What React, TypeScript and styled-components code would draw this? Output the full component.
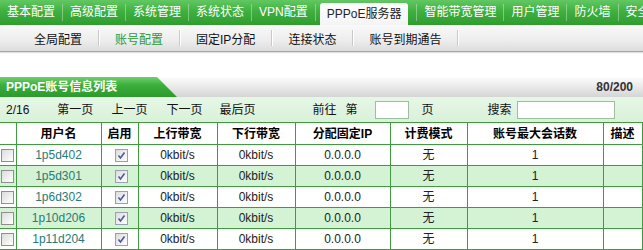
import React from 'react';
import styled, { createGlobalStyle } from 'styled-components';

const GlobalStyle = createGlobalStyle`
    html, body {
        margin: 0;
        padding: 0;
        background: #fff;
    }
    body {
        width: 643px;
        overflow: hidden;
        font-family: "Liberation Sans", "Noto Sans CJK SC", sans-serif;
        font-size: 12px;
        line-height: 14px;
        color: #222;
    }
`;

const TOP_ITEMS = ['基本配置', '高级配置', '系统管理', '系统状态', 'VPN配置'];
const TOP_ITEMS_AFTER = ['智能带宽管理', '用户管理', '防火墙', '安全'];
const SUB_ITEMS = ['全局配置', '账号配置', '固定IP分配', '连接状态', '账号到期通告'];
const HEADERS = ['', '用户名', '启用', '上行带宽', '下行带宽', '分配固定IP', '计费模式', '账号最大会话数', '描述'];
const COL_WIDTHS = [16, 85, 37, 79, 78, 95, 77, 136, 39];
const ACCOUNTS = ['1p5d402', '1p5d301', '1p6d302', '1p10d206', '1p11d204'];

const TopNav = styled.div`
    display: flex;
    align-items: flex-end;
    height: 25px;
    background: linear-gradient(#62c862 0%, #3fb03f 45%, #2e9d2e 100%);
    white-space: nowrap;
    overflow: hidden;
`;

const NavItem = styled.div`
    height: 25px;
    line-height: 25px;
    padding: 0 7px;
    color: #fff;
`;

const NavSep = styled.div`
    align-self: center;
    width: 1px;
    height: 17px;
    background: rgba(255, 255, 255, 0.35);
    flex-shrink: 0;
`;

const NavTab = styled.div`
    height: 22px;
    line-height: 23px;
    padding: 0 7px;
    margin: 0 8px 0 4px;
    border-radius: 3px 3px 0 0;
    background: linear-gradient(#ffffff, #f4f4f4);
    color: #222;
`;

const SubNav = styled.div`
    display: flex;
    align-items: center;
    height: 26px;
    padding-left: 18px;
    background: linear-gradient(#f9f9f9 0%, #ededed 60%, #dcdcdc 100%);
    border-bottom: 1px solid #a5a5a5;
    box-shadow: 0 1px 1px rgba(0, 0, 0, 0.12);
`;

const SubItem = styled.div<{ $active?: boolean }>`
    padding: 3px 16px 0;
    color: ${(p) => (p.$active ? '#2f9a2f' : '#111')};
`;

const SubSep = styled.div`
    width: 1px;
    height: 16px;
    background: #c9c9c9;
    box-shadow: 1px 0 0 #fff;
`;

const Section = styled.div`
    margin-top: 25px;
`;

const TitleBar = styled.div`
    display: flex;
    justify-content: space-between;
    align-items: center;
    height: 20px;
    background: linear-gradient(#fdfdfd, #d5d5d5);
`;

const TitleTab = styled.div`
    width: 177px;
    height: 20px;
    line-height: 21px;
    padding-left: 6px;
    box-sizing: border-box;
    clip-path: polygon(0 0, 157px 0, 177px 100%, 0 100%);
    background: linear-gradient(#6fcf6f 0%, #3caf3c 40%, #2b9a2b 100%);
    color: #fff;
    font-weight: bold;
`;

const Count = styled.div`
    padding-right: 10px;
    font-weight: bold;
    color: #333;
`;

const Pager = styled.div`
    display: flex;
    align-items: center;
    height: 25px;
    padding-left: 6px;
    background: linear-gradient(#e6f7e6, #d9f1d9);
    color: #111;
`;

const PagerItem = styled.span<{ $gap: number }>`
    margin-left: ${(p) => p.$gap}px;
`;

const PagerInput = styled.span<{ $width: number; $gap: number }>`
    display: block;
    width: ${(p) => p.$width}px;
    height: 16px;
    margin-left: ${(p) => p.$gap}px;
    background: #fff;
    border: 1px solid #9dbf9d;
`;

const Table = styled.table`
    width: 642px;
    border-collapse: collapse;
    table-layout: fixed;
`;

const Th = styled.th`
    height: 21px;
    padding: 0;
    border: 1px solid #3e9c3e;
    background: #fff;
    color: #000;
    font-weight: bold;
    text-align: center;
    &:first-child {
        border-left: none;
    }
`;

const Row = styled.tr<{ $alt: boolean }>`
    background: ${(p) => (p.$alt ? '#d4f3d4' : '#fff')};
`;

const Td = styled.td`
    height: 20px;
    padding: 0;
    border: 1px solid #3e9c3e;
    text-align: center;
    color: #222;
    &:first-child {
        border-left: none;
        text-align: left;
    }
`;

const Account = styled.span`
    color: #2a7a7a;
`;

const Box = styled.span<{ $checked?: boolean }>`
    display: inline-block;
    vertical-align: middle;
    width: 11px;
    height: 11px;
    margin-left: ${(p) => (p.$checked ? '3px' : '1px')};
    border: 1px solid ${(p) => (p.$checked ? '#9aa0b4' : '#8f8f8f')};
    background: linear-gradient(135deg, #dcdcdc, #ffffff);
    position: relative;
    & > svg {
        position: absolute;
        left: 1px;
        top: 1px;
    }
`;

function CheckBox({ checked }: { checked?: boolean }) {
    return (
        <Box $checked={checked}>
            {checked && (
                <svg width="9" height="9" viewBox="0 0 9 9">
                    <path d="M1.5 4.5 L3.5 7 L7.5 1.5" fill="none" stroke="#4a5c9c" strokeWidth="1.6" />
                </svg>
            )}
        </Box>
    );
}

export default function App() {
    return (
        <>
            <GlobalStyle />
            <TopNav>
                {TOP_ITEMS.map((item) => (
                    <React.Fragment key={item}>
                        <NavItem>{item}</NavItem>
                        <NavSep />
                    </React.Fragment>
                ))}
                <NavTab>PPPoE服务器</NavTab>
                {TOP_ITEMS_AFTER.map((item) => (
                    <React.Fragment key={item}>
                        <NavSep />
                        <NavItem>{item}</NavItem>
                    </React.Fragment>
                ))}
            </TopNav>
            <SubNav>
                {SUB_ITEMS.map((item) => (
                    <React.Fragment key={item}>
                        <SubItem $active={item === '账号配置'}>{item}</SubItem>
                        <SubSep />
                    </React.Fragment>
                ))}
            </SubNav>
            <Section>
                <TitleBar>
                    <TitleTab>PPPoE账号信息列表</TitleTab>
                    <Count>80/200</Count>
                </TitleBar>
                <Pager>
                    <PagerItem $gap={0}>2/16</PagerItem>
                    <PagerItem $gap={28}>第一页</PagerItem>
                    <PagerItem $gap={18}>上一页</PagerItem>
                    <PagerItem $gap={19}>下一页</PagerItem>
                    <PagerItem $gap={17}>最后页</PagerItem>
                    <PagerItem $gap={57}>前往</PagerItem>
                    <PagerItem $gap={9}>第</PagerItem>
                    <PagerInput $gap={18} $width={32} />
                    <PagerItem $gap={12}>页</PagerItem>
                    <PagerItem $gap={54}>搜索</PagerItem>
                    <PagerInput $gap={6} $width={96} />
                </Pager>
                <Table>
                    <colgroup>
                        {COL_WIDTHS.map((w, i) => (
                            <col key={i} style={{ width: w }} />
                        ))}
                    </colgroup>
                    <thead>
                        <tr>
                            {HEADERS.map((h, i) => (
                                <Th key={i}>{h}</Th>
                            ))}
                        </tr>
                    </thead>
                    <tbody>
                        {ACCOUNTS.map((name, i) => (
                            <Row key={name} $alt={i % 2 === 1}>
                                <Td>
                                    <CheckBox />
                                </Td>
                                <Td>
                                    <Account>{name}</Account>
                                </Td>
                                <Td>
                                    <CheckBox checked />
                                </Td>
                                <Td>0kbit/s</Td>
                                <Td>0kbit/s</Td>
                                <Td>0.0.0.0</Td>
                                <Td>无</Td>
                                <Td>1</Td>
                                <Td />
                            </Row>
                        ))}
                    </tbody>
                </Table>
            </Section>
        </>
    );
}
